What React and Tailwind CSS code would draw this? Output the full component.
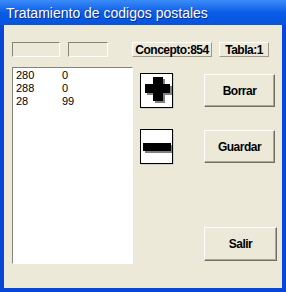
const rows = [
  ['280', '0'],
  ['288', '0'],
  ['28', '99'],
]

const font = { fontFamily: '"Liberation Sans", Arial, sans-serif' }

function WinButton({ label, className }) {
  return (
    <button
      className={`flex items-center justify-center border border-t-white border-l-white border-b-[#716f64] border-r-[#716f64] bg-[#ECE9D8] text-[12px] font-bold tracking-[-0.5px] text-black shadow-[inset_-1px_-1px_0_#aca899] ${className}`}
    >
      {label}
    </button>
  )
}

function Field({ className }) {
  return <div className={`h-[15px] border border-t-[#85837a] border-l-[#85837a] border-b-white border-r-white bg-[#ECE9D8] ${className}`} />
}

function Panel({ label, className }) {
  return (
    <div className={`flex h-[15px] items-center justify-center border border-t-white border-l-white border-b-[#9d9a8c] border-r-[#9d9a8c] text-[12px] font-bold leading-none tracking-[-0.5px] text-black ${className}`}>
      {label}
    </div>
  )
}

export default function App() {
  return (
    <div className="flex h-[292px] w-[286px] flex-col overflow-hidden bg-[#0846d8]" style={font}>
      <div className="flex h-[25px] shrink-0 items-center bg-gradient-to-b from-[#3b8cf8] via-[#0a5ce6] to-[#0654dc] pl-[6px]">
        <span className="text-[14px] leading-none text-white [text-shadow:1px_1px_0_#0a2a8c]">Tratamiento de codigos postales</span>
      </div>
      <div className="mx-[4px] mb-[4px] flex-1 bg-[#ECE9D8] pl-[8px]">
        <div className="mt-[17px] flex items-start">
          <Field className="w-[48px]" />
          <Field className="ml-[8px] w-[40px]" />
          <Panel label="Concepto:854" className="ml-[24px] w-[80px]" />
          <Panel label="Tabla:1" className="ml-[7px] w-[50px]" />
        </div>
        <div className="mt-[10px] flex items-start">
          <div className="h-[197px] w-[121px] border border-t-[#85837a] border-l-[#85837a] border-b-white border-r-white bg-white pl-[3px] pt-[1px] text-[11px] leading-[13px] text-black">
            {rows.map((row, i) => (
              <div key={i} className="flex">
                <span className="w-[46px]">{row[0]}</span>
                <span>{row[1]}</span>
              </div>
            ))}
          </div>
          <div className="ml-[7px] mt-[6px] flex flex-col">
            <div className="h-[35px] w-[33px] border border-black bg-white shadow-[1px_1px_0_#d4d0c8]">
              <svg width="31" height="33" viewBox="0 0 31 33">
                <path d="M14 5h10v7h7v9h-7v8h-10v-8h-8v-9h8z" fill="#808080" />
                <path d="M12 3h10v7h7v9h-7v8h-10v-8h-8v-9h8z" fill="#000" />
              </svg>
            </div>
            <div className="mt-[21px] h-[35px] w-[33px] border border-black bg-white shadow-[1px_1px_0_#d4d0c8]">
              <svg width="31" height="33" viewBox="0 0 31 33">
                <rect x="4" y="15" width="27" height="8" fill="#808080" />
                <rect x="2" y="13" width="28" height="8" fill="#000" />
              </svg>
            </div>
          </div>
          <div className="ml-[31px] mt-[7px] flex flex-col">
            <WinButton label="Borrar" className="h-[33px] w-[71px]" />
            <WinButton label="Guardar" className="mt-[23px] h-[33px] w-[71px]" />
            <WinButton label="Salir" className="mt-[64px] h-[34px] w-[73px]" />
          </div>
        </div>
      </div>
    </div>
  )
}
